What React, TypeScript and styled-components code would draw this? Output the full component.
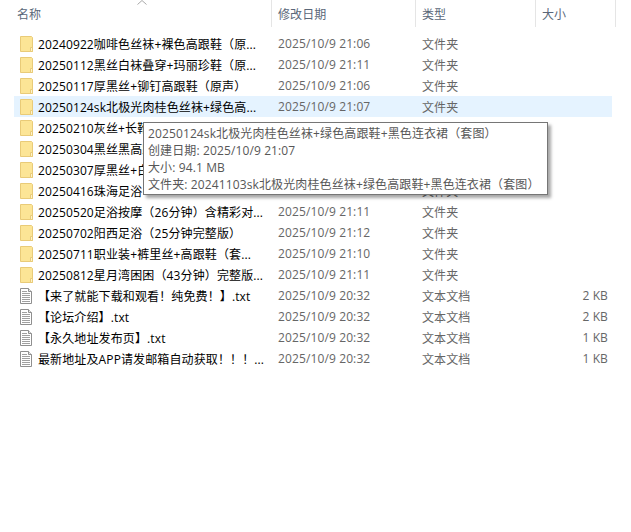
import { createGlobalStyle } from "styled-components";
import styled from "styled-components";

const GlobalStyle = createGlobalStyle`
  html, body {
    margin: 0;
    padding: 0;
    background: #fff;
  }
  body {
    font-family: "Open Sans", "Noto Sans CJK SC", sans-serif;
    font-size: 12px;
    letter-spacing: 0.12px;
  }
`;

type FileRow = {
  name: string;
  date: string;
  type: string;
  size?: string;
  txt?: boolean;
};

const rows: FileRow[] = [
  { name: "20240922咖啡色丝袜+裸色高跟鞋（原...", date: "2025/10/9 21:06", type: "文件夹" },
  { name: "20250112黑丝白袜叠穿+玛丽珍鞋（原...", date: "2025/10/9 21:11", type: "文件夹" },
  { name: "20250117厚黑丝+铆钉高跟鞋（原声）", date: "2025/10/9 21:06", type: "文件夹" },
  { name: "20250124sk北极光肉桂色丝袜+绿色高...", date: "2025/10/9 21:07", type: "文件夹" },
  { name: "20250210灰丝+长靴", date: "2025/10/9 21:11", type: "文件夹" },
  { name: "20250304黑丝黑高跟", date: "2025/10/9 21:11", type: "文件夹" },
  { name: "20250307厚黑丝+白袜", date: "2025/10/9 21:11", type: "文件夹" },
  { name: "20250416珠海足浴", date: "2025/10/9 21:11", type: "文件夹" },
  { name: "20250520足浴按摩（26分钟）含精彩对...", date: "2025/10/9 21:11", type: "文件夹" },
  { name: "20250702阳西足浴（25分钟完整版）", date: "2025/10/9 21:12", type: "文件夹" },
  { name: "20250711职业装+裤里丝+高跟鞋（套...", date: "2025/10/9 21:10", type: "文件夹" },
  { name: "20250812星月湾困困（43分钟）完整版...", date: "2025/10/9 21:11", type: "文件夹" },
  { name: "【来了就能下载和观看！纯免费！】.txt", date: "2025/10/9 20:32", type: "文本文档", size: "2 KB", txt: true },
  { name: "【论坛介绍】.txt", date: "2025/10/9 20:32", type: "文本文档", size: "2 KB", txt: true },
  { name: "【永久地址发布页】.txt", date: "2025/10/9 20:32", type: "文本文档", size: "1 KB", txt: true },
  { name: "最新地址及APP请发邮箱自动获取！！！...", date: "2025/10/9 20:32", type: "文本文档", size: "1 KB", txt: true },
];

function FolderIcon() {
  return (
    <svg width="16" height="16" viewBox="0 0 16 16">
      <path d="M1.5 0.5h11l1 1v14h-12z" fill="#fce596" stroke="#e9cb78" />
      <path d="M11.5 11.5h2v4h-2z" fill="#fff3c8" stroke="#e9cb78" />
    </svg>
  );
}

function TextFileIcon() {
  return (
    <svg width="16" height="16" viewBox="0 0 16 16">
      <path d="M1.5 0.5h8l3 3v12h-11z" fill="#fff" stroke="#8f8f8f" />
      <path d="M9.5 0.5v3h3" fill="#e8e8e8" stroke="#8f8f8f" />
      <path d="M3 3.5h5M3 5.5h8M3 7.5h8M3 9.5h8M3 11.5h8M3 13.5h8" stroke="#a0a0a0" />
    </svg>
  );
}

export default function App() {
  return (
    <>
      <GlobalStyle />
      <Page>
        <SortArrow viewBox="0 0 10 5" width="10" height="5">
          <path d="M0.5 4.5L5 0.5l4.5 4" fill="none" stroke="#a9a9a9" />
        </SortArrow>
        <Header>
          <HeaderCell>名称</HeaderCell>
          <HeaderCell>修改日期</HeaderCell>
          <HeaderCell>类型</HeaderCell>
          <HeaderCell>大小</HeaderCell>
        </Header>
        <List>
          {rows.map((row, idx) => (
            <Row key={row.name} $hovered={idx === 3}>
              <NameCell>
                {row.txt ? <TextFileIcon /> : <FolderIcon />}
                <Name>{row.name}</Name>
              </NameCell>
              <Meta>{row.date}</Meta>
              <Meta>{row.type}</Meta>
              <SizeCell>{row.size}</SizeCell>
            </Row>
          ))}
        </List>
        <Tooltip>
          <div>20250124sk北极光肉桂色丝袜+绿色高跟鞋+黑色连衣裙（套图）</div>
          <div>创建日期: 2025/10/9 21:07</div>
          <div>大小: 94.1 MB</div>
          <div>文件夹: 20241103sk北极光肉桂色丝袜+绿色高跟鞋+黑色连衣裙（套图）</div>
        </Tooltip>
      </Page>
    </>
  );
}

const Page = styled.div`
  position: relative;
  width: 631px;
  height: 532px;
  overflow: hidden;
  background: #fff;
`;

const SortArrow = styled.svg`
  position: absolute;
  left: 137px;
  top: 0;
`;

const Header = styled.div`
  display: grid;
  grid-template-columns: 272px 144px 120px 80px;
  height: 27px;
`;

const HeaderCell = styled.div`
  display: flex;
  align-items: center;
  padding-left: 6px;
  color: #5a6779;
  border-right: 1px solid #e5e5e5;
  &:first-child {
    padding-left: 17px;
  }
`;

const List = styled.div`
  display: flex;
  flex-direction: column;
  margin: 6px 0 0 14px;
  width: 598px;
`;

const Row = styled.div<{ $hovered?: boolean }>`
  display: grid;
  grid-template-columns: 264px 144px 120px 66px;
  align-items: center;
  height: 21px;
  background: ${(p) => (p.$hovered ? "#e5f3ff" : "transparent")};
`;

const NameCell = styled.div`
  display: flex;
  align-items: center;
  gap: 3px;
  padding-left: 5px;
  white-space: nowrap;
  overflow: hidden;
`;

const Name = styled.span`
  color: #000;
`;

const Meta = styled.span`
  color: #666;
  white-space: nowrap;
`;

const SizeCell = styled(Meta)`
  text-align: right;
`;

const Tooltip = styled.div`
  position: absolute;
  left: 143px;
  top: 122px;
  width: 405px;
  height: 73px;
  box-sizing: border-box;
  padding: 2px 4px;
  background: #fff;
  border: 1px solid #767676;
  box-shadow: 3px 3px 3px rgba(0, 0, 0, 0.35);
  color: #575757;
  line-height: 17px;
  white-space: nowrap;
`;
